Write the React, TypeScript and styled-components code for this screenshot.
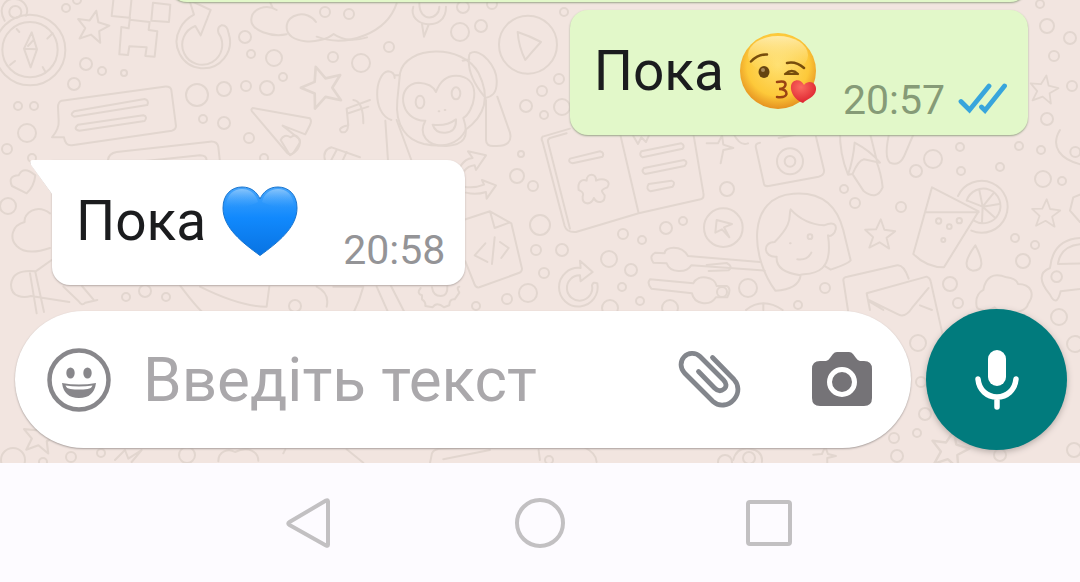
import React from "react";
import styled, { createGlobalStyle } from "styled-components";

const GlobalStyle = createGlobalStyle`
  *, *::before, *::after { box-sizing: border-box; }
  body { margin: 0; background: #fdfbff; font-family: Roboto, "Noto Sans", sans-serif; }
  button { border: 0; padding: 0; background: none; cursor: pointer; }
`;

const Screen = styled.div`
  display: flex;
  flex-direction: column;
  height: 100vh;
`;

const Chat = styled.main`
  position: relative;
  isolation: isolate;
  flex: 1;
  min-height: 0;
  display: flex;
  flex-direction: column;
  justify-content: flex-end;
  overflow: hidden;
  background: #f2e5e0;
`;

const WallpaperSvg = styled.svg`
  position: absolute;
  inset: 0;
  width: 100%;
  height: 100%;
  z-index: -1;
  fill: none;
  stroke: #e2d6cf;
  stroke-width: 6;
  stroke-linejoin: round;
  stroke-linecap: round;
`;

const Messages = styled.ol`
  display: flex;
  flex-direction: column;
  flex-shrink: 0;
  list-style: none;
  margin: 0;
  padding: 0 52px 24px;
`;

const Bubble = styled.li<{ $own?: boolean }>`
  position: relative;
  display: flex;
  align-self: ${(p) => (p.$own ? "flex-end" : "flex-start")};
  padding: 22px 20px 11px 24px;
  border-radius: ${(p) => (p.$own ? "18px" : "0 18px 18px 18px")};
  background: ${(p) => (p.$own ? "#e2f8c9" : "#ffffff")};
  box-shadow: 0 1px 2px ${(p) => (p.$own ? "#9aa58a" : "#b5aaa6")};
  margin-top: ${(p) => (p.$own ? "8px" : "25px")};
`;

const EarlierBubble = styled(Bubble)`
  width: 88%;
  height: 60px;
`;

const Tail = styled.svg`
  position: absolute;
  top: 0;
  left: -22px;
  width: 23px;
  height: 36px;
  overflow: visible;
`;

const Words = styled.span`
  font-size: 55px;
  line-height: 78px;
  margin-bottom: 14px;
  color: #1b1c1e;
  white-space: nowrap;
`;

const Emoji = styled.svg`
  width: 78px;
  height: 78px;
  margin-left: 15px;
  flex-shrink: 0;
`;

const Meta = styled.span<{ $own?: boolean }>`
  display: flex;
  align-items: center;
  align-self: flex-end;
  gap: 13px;
  margin-left: ${(p) => (p.$own ? "26px" : "44px")};
  color: ${(p) => (p.$own ? "#869b77" : "#949497")};
  font-size: 41px;
  line-height: 48px;
`;

const Ticks = styled.svg`
  width: 50px;
  height: 34px;
`;

const Composer = styled.form`
  display: flex;
  align-items: center;
  flex-shrink: 0;
  gap: 15px;
  padding: 0 13px 13px 15px;
`;

const Field = styled.div`
  flex: 1;
  min-width: 0;
  display: flex;
  align-items: center;
  height: 137px;
  padding: 0 37px 0 32px;
  border-radius: 69px;
  background: #fff;
  box-shadow: 0 1px 2px #a89f9c;
`;

const TextBox = styled.input`
  flex: 1;
  min-width: 0;
  margin: 0 0 0 32px;
  padding: 0;
  border: 0;
  outline: 0;
  background: none;
  font-family: inherit;
  font-size: 62px;
  line-height: 72px;
  color: #1b1c1e;
  &::placeholder { color: #aaa8ab; opacity: 1; }
`;

const IconButton = styled.button`
  display: grid;
  flex-shrink: 0;
  width: 64px;
  height: 64px;
  & + & { margin-left: 68px; }
  svg { width: 64px; height: 64px; }
`;

const MicButton = styled.button`
  display: grid;
  place-items: center;
  flex-shrink: 0;
  width: 141px;
  height: 141px;
  border-radius: 50%;
  background: #017b7d;
  box-shadow: 0 2px 6px #b5aaa6;
`;

const NavBar = styled.nav`
  display: flex;
  flex-shrink: 0;
  justify-content: center;
  align-items: center;
  gap: 166px;
  height: 119px;
  background: #fdfbff;
`;

const NavButton = styled.button`
  display: grid;
  width: 64px;
  height: 64px;
  svg { fill: none; stroke: #c2c0c2; stroke-width: 4; stroke-linejoin: round; }
`;

const dots: [number, number, number][] = [
  [66, 8, 4], [77, 0, 4], [86, 64, 6], [102, 71, 4], [124, 73, 3], [74, 84, 6], [18, 106, 4], [34, 106, 4], [27, 133, 9], [7, 149, 5],
  [245, 37, 6], [251, 54, 4], [274, 58, 8], [283, 77, 4], [246, 86, 5], [267, 88, 7], [197, 95, 11], [224, 89, 7], [203, 119, 4],
  [224, 123, 6], [249, 138, 5], [333, 57, 5], [325, 12, 5], [349, 14, 5], [361, 63, 9], [32, 158, 4], [264, 158, 4],
  [389, 47, 5], [463, 7, 6], [481, 26, 6], [460, 32, 9], [492, 4, 5], [564, 12, 4], [559, 79, 5], [542, 91, 5], [526, 106, 6],
  [544, 115, 4], [562, 107, 8], [521, 154, 3], [517, 176, 7], [533, 186, 5], [540, 225, 10], [623, 234, 5], [642, 240, 4],
  [666, 228, 6], [683, 221, 4], [536, 250, 5], [562, 250, 6], [609, 259, 8], [631, 270, 6], [544, 273, 5], [528, 293, 9],
  [507, 299, 5], [476, 306, 4], [622, 287, 4], [640, 301, 4], [727, 189, 7], [748, 288, 9], [722, 292, 5], [825, 288, 5], [798, 305, 4],
  [1040, 4, 4], [1047, 26, 7], [1070, 38, 6], [1054, 56, 5], [1072, 86, 5], [1047, 119, 6], [960, 147, 4], [1019, 146, 4],
  [1041, 150, 4], [933, 159, 9], [916, 171, 6], [961, 171, 4], [1000, 167, 4], [1043, 179, 8], [1062, 181, 4], [844, 189, 4],
  [855, 203, 5], [901, 207, 5], [1015, 238, 4], [1035, 245, 4], [1023, 261, 7], [950, 284, 7], [958, 303, 5], [1059, 317, 8],
  [1075, 344, 8], [918, 343, 8], [921, 382, 5], [925, 414, 6], [917, 433, 4], [1000, 455, 6], [1074, 450, 7],
  [8, 206, 8], [126, 297, 4], [145, 291, 6], [166, 297, 4], [295, 306, 6], [13, 460, 12], [71, 457, 5], [101, 453, 4], [187, 455, 8],
  [43, 462, 4], [549, 460, 4], [749, 458, 6], [725, 462, 7], [894, 438, 5], [897, 456, 6], [610, 308, 8], [670, 308, 8],
];

const star = "M0-46 L13-14 L47-11 L21 11 L31 44 L0 26 L-31 44 L-21 11 L-47-11 L-13-14 Z";
const stars: [number, number, number, number][] = [
  [93, 26, 12, 0.34], [322, 86, -18, 0.44], [1044, 89, 10, 0.3], [880, 234, 3, 0.32], [1046, 213, 3, 0.3],
  [40, 436, 10, 0.36], [950, 449, 12, 0.4],
];

const Wallpaper = () => (
  <WallpaperSvg viewBox="0 0 1080 463" preserveAspectRatio="xMidYMin slice" aria-hidden="true">
    <g strokeWidth="2">
      {dots.map(([x, y, r], i) => <circle key={i} cx={x} cy={y} r={r} />)}
    </g>
    {stars.map(([x, y, a, s], i) => (
      <path key={i} d={star} transform={`translate(${x} ${y}) rotate(${a}) scale(${s})`} />
    ))}
    {/* compass, robot, refresh arrow, clouds, speech bubbles and paper plane */}
    <g transform="scale(.3333)">
      <circle cx="90" cy="150" r="106" /><circle cx="90" cy="149" r="83" />
      <circle cx="46" cy="36" r="18" /><path d="M14 62C-10 20 20-6 46-3c30 3 42 30 32 50" />
      <path d="M95 97 72 146l20 56 19-54ZM72 146l39 2M50 87l8 9M158 100l-16 16M30 195l15-12M136 215l-8-14M84 138l18-20" />
      <path d="M341-8 335 48l54 5 6-60M459 8l-5 54 53 4 4-52ZM390 53l-4 32-22-4-6 82 26 2 4-26 52 3-4 26 28 2 8-76-26-4 3-24-60-7" />
      <path d="M540 86a80 80 0 1 0 146 14q-4-26-22-24-14 6-8 24a60 60 0 1 1-70-22l16 28 30-76-64-30 14 44q-30 16-42 42Z" />
      <path d="M830 30c-30-20-74-4-76 28-2 34 60 54 106 45M948 66c-26-38-88-26-88 16 0 50 100 54 141 20 30 22 70 20 100 10M808 0l10 24" />
      <path d="M185 302 492 260q20-2 22 10l14 108q0 10-12 14L216 436q-20 2-24-24l-36 0q22-26 20-50l-2-40q0-16 11-20Z" />
      <path d="m222 334 212-37q14 4 8 18L222 350q-14-6 0-16ZM234 374l196-28q14 4 4 17L238 392q-20-4-4-18Z" />
      <path d="M192 560l10 60q4 10 20 6M324 480q2-20 26-24l280-31q22-2 25 16l10 90M350 492l250-26q20 0 20 16" />
      <path d="m758 324 172 31q6 8 0 20l-14 28-68-26 50 40q4 6 0 14l-18 28q-10 8-18 0L756 334q-4-6 2-10Z" />
      <path d="M1110 300l-70 26 5 50q-20 4-25 12 0 12 16 8 10-6 8-28M1045 340l60-20M975 480q-8-30 20-38l85 30M1010 450l-16 30M1040 456l-16 34" />
      <path d="M842 420l28 46q30-16 30-40-8-30-28-14-20-12-30 8Z" />
    </g>
    {/* magnifier, monkey, play, arrows, notebook, code sheet, sliders */}
    <g transform="translate(360 0) scale(.3333)">
      <path d="M-130 110c90 34 210-10 240-100M160 20c-20 60 100 80 98 0M178 10c0 60 60 50 60 10M186 72l6 38 14-36" />
      <circle cx="504" cy="134" r="87" /><path d="M473 96q36 12 70 30-26 28-47 54-20-40-23-84Z" />
      <path d="M120 220c16-84 190-90 236 0 30 60 30 120-40 170M112 300c-8 80 30 120 80 132 50 10 100 6 124-40M120 220l-8 80" />
      <path d="M196 362c-80 0-90-110-20-114q40 2 52 28 20-56 72-48c70 14 40 110 10 126 20 60 0 80-50 84-60 2-86-36-64-76Z" />
      <ellipse cx="180" cy="306" rx="13" ry="19" /><ellipse cx="288" cy="280" rx="13" ry="18" />
      <path d="M218 374q40 6 70-16 2 38-32 40-30 2-38-24ZM236 334h2M254 330h2M94 360c-60-20-50-140-10-146q20 2 20 20M76 362l8 120M110 360l44 120M330 160c30-20 84 40 80 90 0 30-14 40-34 44M328 164c-8 44 16 90 44 124M378 300l0 120q0 20 26 18c40 2 52-14 46-40L412 290M104 226h14M308 182l20-4" />
      <path d="M-20 300q30 4 30 70" />
      <path d="M300 500c14-20 22-24 38-26l-14-20 54 12-30 44-4-14q-20 2-30 16M312 560q30 6 60-6l-6-14 42 16-28 40-2-20q-30 10-60 2" />
      <path d="M548 410l82-24M548 410q-6 6 0 16l66 252q6 20 34 18L836 640l186-42q12-4 8-20L1000 400M780 400l56 240M620 400l-50 14q-8 4-6 12l66 260" />
      <path d="m630 476 90-22q14 4 8 16l-90 20q-16-4-8-14ZM844 454l120-24q12 6 4 16l-120 26q-12-6-4-18ZM852 504l120-24q14 6 2 18l-118 24q-14-6-4-18ZM866 552l68-10q14 4 4 18l-66 14q-16-6-6-22ZM820 408l14 24 10-20 14 14 10-22" />
      <path d="M680 542c0-24 30-24 28 0 24-10 48 2 34 20-20 8-20 10-8 24 2 24-24 26-32 8-10 24-36 20-34-4 6-14-6-16-12-20-4-24 10-34 24-28Z" />
      <path d="M310 660l80-26 64 36 32 136q0 10-12 14l-116 42q-10 2-14-8l-28-70M390 634l14 50 44-16M376 730l-32 36 38 20M404 712l-8 80M420 726l26 18-22 30" />
      <path d="M712 850a58 58 0 1 1-50-46l-2-22 38 34-36 28-2-18a38 38 0 1 0 36 30q4-12 16-6Z" />
      <path d="M1200 786l-216-18c-20-36-70-28-70-8l-28-2q-20 10-6 30l40 2c10 30 60 30 74 6l220 16M870 838l130 12c14-30 66-20 70 8h30q16 8 2 34h-34c-20 30-66 20-72-12l-122-14q-14-16-4-28Z" />
      <path d="M182 864q-14 16 4 22v12q12 8 10 20l22 4q12-18 34 0l16-6q0-20 16-18l14-20q-10-18 0-18" /><path d="M216 862q4 26 26 26t20-30" />
      <path d="M50 860l40 90M92 856l46 90" />
    </g>
    {/* camera, pepper, girl, envelope, drink, cloud, car */}
    <g transform="translate(720 130) scale(.3333)">
      <path d="M120 38q-16 2-12 16l24 108q2 8 14 6l150-28q18-4 16-20L288 20M176 24l50-10M40 10q20 40 44 30" />
      <circle cx="210" cy="94" r="39" /><circle cx="210" cy="94" r="16" />
      <path d="M360 0q-2 70 24 134l14-2q16-40 34-44l48 10q-30-36-76-60-4 50-20 96M450 10l20 80M400 136l30 46q40 32 58-10-4-40-18-76M510 0q-20 80 0 98 30 14 46-28l30-70" />
      <path d="M166 482C90 380 80 200 220 191c80-6 130 30 150 110l22 90q-6 10-60 28l-20-12M166 482q70-4 76-46-76-10-72-56c-40 4-44-44-6-44 60-60 40-80 48-98q40 44 100 48c60-24 30 44 12 30 18 120-50 114-82 118M210 340h2M232 388q30 4 42-20" />
      <circle cx="270" cy="320" r="7" /><circle cx="10" cy="293" r="58" /><path d="M-10 270l46 12-24 10 16 30-22-24-20 10Z" />
      <path d="M636 172l-56 200q40 40 92 40L776 244ZM616 247l160 0" />
      <path d="M714 198a78 78 0 1 1 40 104M740 212a52 52 0 1 1 22 60M788 230l-10-50M788 230l34-42M788 230l50-8M788 230l38 34M788 230l-2 48M788 230l-46-18" />
      <circle cx="656" cy="273" r="8" /><circle cx="688" cy="290" r="7" /><circle cx="718" cy="272" r="8" /><circle cx="670" cy="330" r="6" />
      <path d="M766 346q40 76-8 76-40-10 8-76Z" />
      <path d="M390 580L370 450q0-8 12-10l150-34q20-2 34 40M450 540l-10-50 180-50q10 4 12 14l36 160M446 510l90 44q20 10 40-20l50-60M450 516l40 24M600 526l36 14" />
      <path d="M770 530q-6-36 20-50 10-60 70-38 30 4 34 20c40 0 52 30 30 60-4 30-80 36-100 10-20 14-50 10-54-2Z" />
      <path d="M1100 324q-100-6-110 90-50 20 0 80 20 40 32-10l80-10M1014 400q10-60 86-58M1014 402l86-2" /><circle cx="1010" cy="440" r="16" />
      <path d="M1020 0c-30 50 0 90 70 105" /><circle cx="1066" cy="66" r="15" /><path d="M1090 190l-30 12-10 40 30 34" />
      <path d="M-40 405l60-6q20 10 6 22l-60 2M-40 40l34 0 12-24 4 28 30 10-30 6-8 40" />
      <path d="M78 540q50-40 110 0M130 520v20" />
    </g>
    {/* hearts, clouds and edges below the incoming message */}
    <g transform="translate(0 140) scale(.3333)">
      <path d="M80 160l-44-22q-14-30 20-32 14-30 50 0-4 34-26 54ZM150 220c-40-30-80 0-76 26-40 10-46 50-24 72q30 30 100 6" />
      <path d="M155 360l-48 34q-70-8-74 40c0 40 40 40 60 34l115 18M90 400l20 120M106 396l26 120M190 440l46 44q10 16 20 4l36-8M246 438l34 40" />
      <path d="M540 436q60 80 80 90M600 440q120 60 200 60l8-60M950 440q40 20 30 60M1000 440l90 0q-10 40-30 80" />
    </g>
    <g transform="translate(0 400) scale(.3333)">
      <path d="M345 180l30-30 10 26 40-26-30 36M655 184c0-30 30-40 50-28 40-20 70 0 70 26M850 160l6-12M1040 148l50 40M1290 190l6-30q4-10 20-14l210-6M1330 178l140-28M1620 180l-4-30M1750 140q40 20 40 46M2200 180q10-40 50-34t36 40" />
      <path d="M2440 164l26-2 10-22 8 22 24 6-26 6 0 14M2890 40q20 40 80 50" />
    </g>
  </WallpaperSvg>
);

const KissEmoji = () => (
  <Emoji viewBox="0 0 78 78" role="img" aria-label="Поцілунок">
    <defs>
      <radialGradient id="face" cx=".5" cy=".42" r=".6">
        <stop offset="0" stopColor="#ffe070" /><stop offset=".68" stopColor="#fdc93a" /><stop offset="1" stopColor="#e28a1c" />
      </radialGradient>
      <linearGradient id="shine" x1="0" y1="0" x2="0" y2="1">
        <stop offset="0" stopColor="#fff3c4" stopOpacity=".8" /><stop offset="1" stopColor="#ffe070" stopOpacity="0" />
      </linearGradient>
      <radialGradient id="redHeart" cx=".4" cy=".3" r=".7">
        <stop offset="0" stopColor="#fb6a60" /><stop offset="1" stopColor="#de2530" />
      </radialGradient>
    </defs>
    <circle cx="39" cy="39" r="38" fill="url(#face)" />
    <ellipse cx="39" cy="23" rx="30" ry="19" fill="url(#shine)" />
    <g fill="none" stroke="#774d0c" strokeLinecap="round" strokeWidth="2.500">
      <path d="M12 29.500q7-7.500 16-7M48 31q9-2 17 5" />
      <path d="M46 42q7-6 13 0M47 42h11" strokeWidth="2.200" />
      <path d="M38 50q9-2 8.500 3-1 4-6.500 4 7.500 0 7.500 5-1 4-9.500 3" stroke="#9a4314" />
    </g>
    <ellipse cx="25" cy="40" rx="5.500" ry="6" fill="#654310" /><circle cx="24" cy="38" r="2" fill="#a88a59" />
    <path d="M64 71C56 68 51 60 52 54c1-7 10-8 13-1 5-6 13-2 12 5-1 7-9 9-13 13Z" fill="url(#redHeart)" />
  </Emoji>
);

const HeartEmoji = () => (
  <Emoji viewBox="0 0 78 78" role="img" aria-label="Синє серце">
    <defs>
      <linearGradient id="blue" x1="0" y1="0" x2="0" y2="1">
        <stop offset="0" stopColor="#46a5fb" /><stop offset=".45" stopColor="#1189fd" /><stop offset="1" stopColor="#0873e2" />
      </linearGradient>
      <linearGradient id="gloss" x1="0" y1="0" x2="0" y2="1">
        <stop offset="0" stopColor="#a4d2fb" stopOpacity=".7" /><stop offset="1" stopColor="#4aa8ff" stopOpacity="0" />
      </linearGradient>
    </defs>
    <path d="M39 73.500C22 61 2 46 2 26 2 12 11 5 21 5c9 0 15 5 18 12C42 10 48 5 57 5c10 0 19 7 19 21 0 20-20 35-37 47.500Z" fill="url(#blue)" stroke="#1874cf" strokeWidth="1" />
    <path d="M5 24C6 12 13 7 21 7s14 5 16 13q-14 8-32 4ZM41 20C43 12 49 7 57 7s15 5 16 17q-16 4-32-4Z" fill="url(#gloss)" />
  </Emoji>
);

const ReadTicks = () => (
  <Ticks viewBox="0 0 50 34" role="img" aria-label="Прочитано" fill="none" stroke="#38a5dc" strokeWidth="4.800" strokeLinecap="round">
    <path d="M3 18.500 11.500 27 31 3M23.500 24 27 27.500 46.500 3" />
  </Ticks>
);

export default function App() {
  return (
    <Screen>
      <GlobalStyle />
      <Chat>
        <Wallpaper />
        <Messages>
          <EarlierBubble $own />
          <Bubble $own>
            <Words>Пока</Words>
            <KissEmoji />
            <Meta $own><time>20:57</time><ReadTicks /></Meta>
          </Bubble>
          <Bubble>
            <Tail viewBox="0 0 23 36" aria-hidden="true">
              <path d="M3 1.500Q-1 1.500 2 5.500L22 33.500" fill="none" stroke="#b5aaa6" strokeOpacity=".7" />
              <path d="M3 0H23V34H22L1 5Q-1 0 3 0Z" fill="#fff" />
            </Tail>
            <Words>Пока</Words>
            <HeartEmoji />
            <Meta><time>20:58</time></Meta>
          </Bubble>
        </Messages>
        <Composer onSubmit={(e) => e.preventDefault()}>
          <Field>
            <IconButton type="button" aria-label="Емодзі">
              <svg viewBox="0 0 64 64" fill="#88878b">
                <circle cx="32" cy="32" r="29.500" fill="none" stroke="#88878b" strokeWidth="4.500" />
                <ellipse cx="23.500" cy="25" rx="4.200" ry="5.500" /><ellipse cx="40.500" cy="25" rx="4.200" ry="5.500" />
                <path d="M15 35q17 3 34 0-2 15-17 15T15 35Z" />
                <path d="M18.500 37.500q13.500 2.200 27 0-1 3-5 3.500-8.500 1.200-17 0-4-.500-5-3.500Z" fill="#fff" />
              </svg>
            </IconButton>
            <TextBox type="text" placeholder="Введіть текст" aria-label="Введіть текст" />
            <IconButton type="button" aria-label="Прикріпити">
              <svg viewBox="0 0 64 64" fill="none" stroke="#83868c" strokeWidth="4.800" strokeLinecap="round">
                <path d="M34.500 9.500 56 31.500C61 37 61.500 45 56 51.500S41 59 35 53.500L6.500 25C2 20 2 13.500 6 9S17.500 4 22 8.500L45.500 32C48.500 35 49 38.500 46 41S39.500 43 36.500 40L20.500 23.500" />
              </svg>
            </IconButton>
            <IconButton type="button" aria-label="Камера">
              <svg viewBox="0 0 64 64">
                <path d="M10 13h6q2 0 4-3l3-4q1.500-2 4-2h12q2.500 0 4 2l3 4q2 3 4 3h4q8 0 8 8v29q0 8-8 8H10q-8 0-8-8V21q0-8 8-8Z" fill="#757377" />
                <circle cx="32" cy="34" r="12.500" fill="none" stroke="#fff" strokeWidth="5" />
              </svg>
            </IconButton>
          </Field>
          <MicButton type="button" aria-label="Голосове повідомлення">
            <svg width="48" height="64" viewBox="0 0 48 64" fill="none" stroke="#fff" strokeLinecap="round">
              <path d="M24 11V29" strokeWidth="18" />
              <path d="M5 31c1 11 9 18 19 18s18-7 19-18M24 50V59" strokeWidth="5.500" />
            </svg>
          </MicButton>
        </Composer>
      </Chat>
      <NavBar aria-label="Системна навігація">
        <NavButton type="button" aria-label="Назад">
          <svg viewBox="0 0 64 64"><path d="M48 9.500Q50 8.500 50 10.500V53.500Q50 55.500 48 54.500L11.500 34Q9 32.500 11.500 31Z" /></svg>
        </NavButton>
        <NavButton type="button" aria-label="Додому">
          <svg viewBox="0 0 64 64"><circle cx="32" cy="32" r="23" /></svg>
        </NavButton>
        <NavButton type="button" aria-label="Недавні">
          <svg viewBox="0 0 64 64"><rect x="10" y="11" width="42" height="42" rx="2" /></svg>
        </NavButton>
      </NavBar>
    </Screen>
  );
}
